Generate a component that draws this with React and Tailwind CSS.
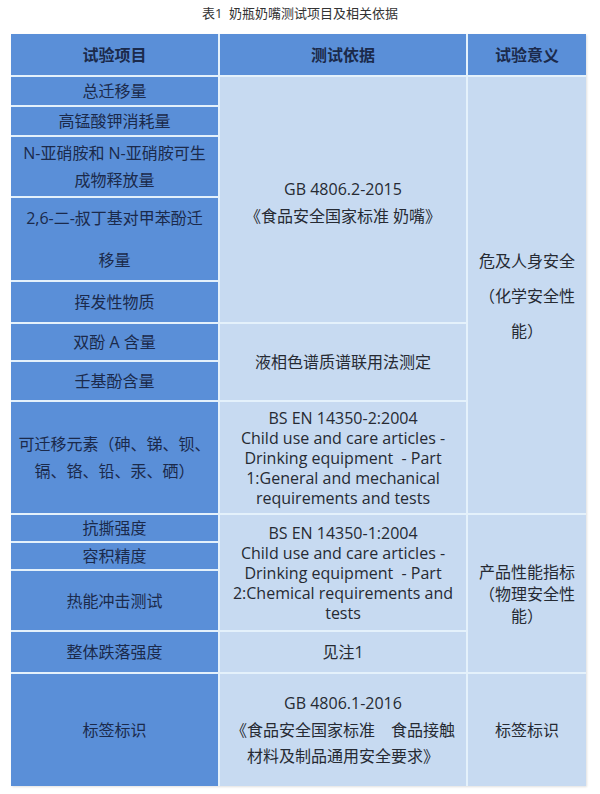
const font = 'font-["Open_Sans","Noto_Sans_CJK_SC",sans-serif]';

function Left({ row, children, className = '' }) {
  return (
    <div
      className={`${row} col-[1] bg-[#5a8fd8] text-[#1b2a4b] flex items-center justify-center text-center px-1 ${className}`}
    >
      <div>{children}</div>
    </div>
  );
}

function Light({ row, col, children, className = '' }) {
  return (
    <div
      className={`${row} ${col} bg-[#c7daf1] text-[#262a33] flex items-center justify-center text-center px-1 whitespace-nowrap ${className}`}
    >
      <div>{children}</div>
    </div>
  );
}

export default function App() {
  return (
    <div className={`w-[600px] h-[794px] bg-white ${font}`}>
      {/* 标题 */}
      <div className="h-[34px] pt-[4px] text-center text-[13px] leading-[18px] text-[#333]">
        表1&nbsp; 奶瓶奶嘴测试项目及相关依据
      </div>

      <div className="ml-[11px] w-[575px] grid grid-cols-[207px_246px_118px] grid-rows-[41px_28px_28px_59px_82px_40px_36px_38px_111px_26px_26px_59px_40px_112px] gap-[2px] bg-[#e4f1fb] text-[16px] shadow-[1px_1px_2px_rgba(0,0,0,0.12)]">
        {/* 表头 */}
        <div className="row-[1] col-[1] bg-[#5a8fd8] flex items-center justify-center font-bold text-[#1b2a4b]">
          试验项目
        </div>
        <div className="row-[1] col-[2] bg-[#5a8fd8] flex items-center justify-center font-bold text-[#1b2a4b]">
          测试依据
        </div>
        <div className="row-[1] col-[3] bg-[#5a8fd8] flex items-center justify-center font-bold text-[#1b2a4b]">
          试验意义
        </div>

        {/* 试验项目 */}
        <Left row="row-[2]">总迁移量</Left>
        <Left row="row-[3]">高锰酸钾消耗量</Left>
        <Left row="row-[4]" className="leading-[27px]">
          N-亚硝胺和 N-亚硝胺可生
          <br />
          成物释放量
        </Left>
        <Left row="row-[5]" className="leading-[42px]">
          2,6-二-叔丁基对甲苯酚迁
          <br />
          移量
        </Left>
        <Left row="row-[6]">挥发性物质</Left>
        <Left row="row-[7]">双酚 A 含量</Left>
        <Left row="row-[8]">壬基酚含量</Left>
        <Left row="row-[9]" className="leading-[27px]">
          可迁移元素（砷、锑、钡、
          <br />
          镉、铬、铅、汞、硒）
        </Left>
        <Left row="row-[10]">抗撕强度</Left>
        <Left row="row-[11]">容积精度</Left>
        <Left row="row-[12]">热能冲击测试</Left>
        <Left row="row-[13]">整体跌落强度</Left>
        <Left row="row-[14]">标签标识</Left>

        {/* 测试依据 */}
        <Light row="row-[2/7]" col="col-[2]" className="leading-[27px] pt-[6px]">
          GB 4806.2-2015
          <br />
          《食品安全国家标准 奶嘴》
        </Light>
        <Light row="row-[7/9]" col="col-[2]">
          液相色谱质谱联用法测定
        </Light>
        <Light row="row-[9]" col="col-[2]" className="leading-[20px]">
          BS EN 14350-2:2004
          <br />
          Child use and care articles -
          <br />
          Drinking equipment&nbsp; - Part
          <br />
          1:General and mechanical
          <br />
          requirements and tests
        </Light>
        <Light row="row-[10/13]" col="col-[2]" className="leading-[20px]">
          BS EN 14350-1:2004
          <br />
          Child use and care articles -
          <br />
          Drinking equipment&nbsp; - Part
          <br />
          2:Chemical requirements and
          <br />
          tests
        </Light>
        <Light row="row-[13]" col="col-[2]">
          见注1
        </Light>
        <Light row="row-[14]" col="col-[2]" className="leading-[26.5px]">
          GB 4806.1-2016
          <br />
          《食品安全国家标准　食品接触
          <br />
          材料及制品通用安全要求》
        </Light>

        {/* 试验意义 */}
        <Light row="row-[2/10]" col="col-[3]" className="leading-[35px] pt-[3px]">
          危及人身安全
          <br />
          （化学安全性
          <br />
          能）
        </Light>
        <Light row="row-[10/14]" col="col-[3]" className="leading-[22px]">
          产品性能指标
          <br />
          （物理安全性
          <br />
          能）
        </Light>
        <Light row="row-[14]" col="col-[3]">
          标签标识
        </Light>
      </div>
    </div>
  );
}
